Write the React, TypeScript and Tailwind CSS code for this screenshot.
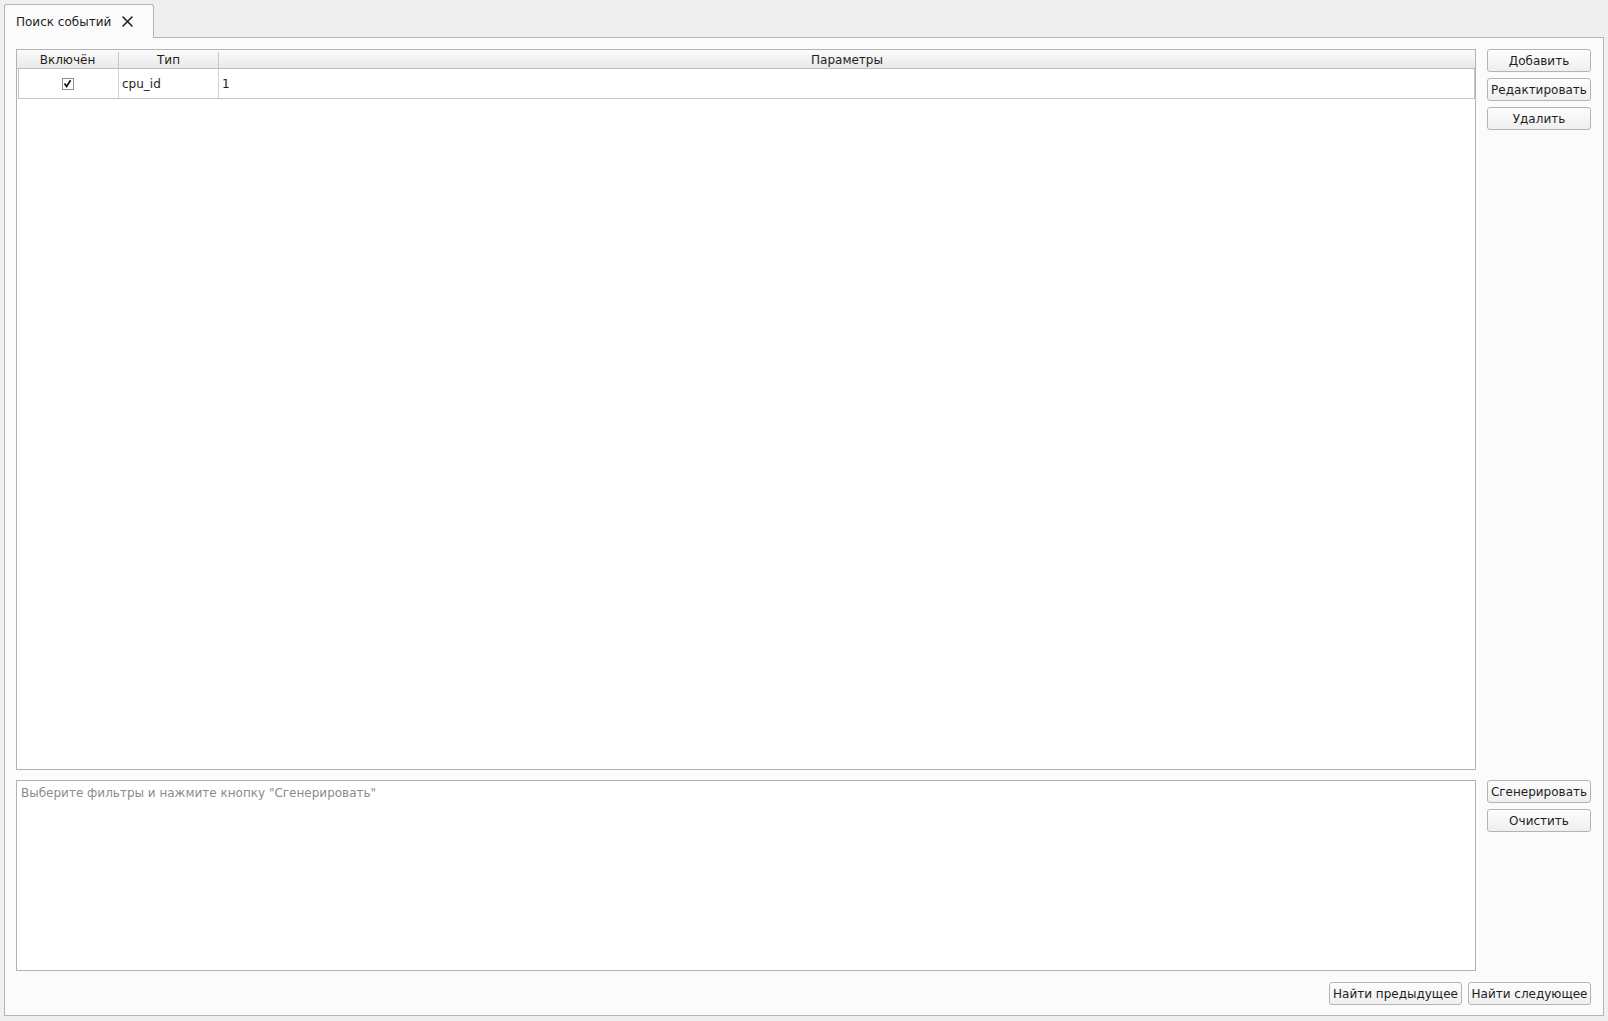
import React from "react";

const font = { fontFamily: '"DejaVu Sans", "Liberation Sans", sans-serif' };

function Button({ label, className = "" }: { label: string; className?: string }) {
  return (
    <button
      className={`h-[23px] flex items-center justify-center rounded-[3px] border border-[#b4b4b4] bg-gradient-to-b from-[#fdfdfd] to-[#efefef] text-[12px] text-[#1e1e1e] whitespace-nowrap ${className}`}
    >
      {label}
    </button>
  );
}

function CloseIcon() {
  return (
    <svg width="11" height="11" viewBox="0 0 11 11" className="block">
      <path d="M1 1 L10 10 M10 1 L1 10" stroke="#222" strokeWidth="1.6" strokeLinecap="round" />
    </svg>
  );
}

function EventTable() {
  return (
    <div className="flex-1 h-[721px] border border-[#b2b2b2] bg-white flex flex-col">
      <div className="flex h-[19px] pt-[2px] bg-gradient-to-b from-[#fbfbfb] to-[#e9e9e9] border-b border-[#bdbdbd] text-[12px] text-[#1e1e1e]">
        <div className="w-[102px] flex items-center justify-center border-r border-[#c8c8c8]">Включён</div>
        <div className="w-[100px] flex items-center justify-center border-r border-[#c8c8c8]">Тип</div>
        <div className="flex-1 flex items-center justify-center">Параметры</div>
      </div>
      <div className="flex h-[30px] ml-[1px] border border-t-0 border-[#c4c4c4] text-[12px] text-[#1e1e1e]">
        <div className="w-[100px] flex items-center justify-center border-r border-[#d2d2d2]">
          <div className="w-[12px] h-[12px] -ml-[2px] border border-[#8e8e8e] bg-white flex items-center justify-center">
            <svg width="9" height="9" viewBox="0 0 9 9">
              <path d="M1.5 4.5 L3.6 7.4 L7.6 1.2" fill="none" stroke="#111" strokeWidth="1.7" />
            </svg>
          </div>
        </div>
        <div className="w-[100px] flex items-center pl-[3px] border-r border-[#d2d2d2]">cpu_id</div>
        <div className="flex-1 flex items-center pl-[3px]">1</div>
      </div>
    </div>
  );
}

export default function App() {
  return (
    <div style={font} className="w-[1608px] h-[1021px] bg-[#efefef] flex flex-col overflow-hidden">
      <div className="flex pl-[4px] pt-[4px]">
        <div className="relative z-10 -mb-px w-[150px] h-[34px] bg-[#fbfbfb] border border-b-0 border-[#b4b4b4] rounded-t-[3px] flex items-center pl-[11px] text-[12px] text-[#1e1e1e]">
          <span>Поиск событий</span>
          <span className="ml-[11px]">
            <CloseIcon />
          </span>
        </div>
      </div>
      <div className="mx-[4px] h-[979px] border border-[#b4b4b4] bg-[#fbfbfb] pl-[11px] pr-[12px] pt-[11px] pb-[10px] flex flex-col">
        <div className="flex gap-[11px]">
          <EventTable />
          <div className="w-[104px] flex flex-col gap-[6px]">
            <Button label="Добавить" />
            <Button label="Редактировать" />
            <Button label="Удалить" />
          </div>
        </div>
        <div className="flex gap-[11px] mt-[10px]">
          <div className="flex-1 h-[191px] border border-[#b2b2b2] bg-white px-[4px] pt-[3px] text-[12px] text-[#8c8c8c]">
            Выберите фильтры и нажмите кнопку "Сгенерировать"
          </div>
          <div className="w-[104px] flex flex-col gap-[6px]">
            <Button label="Сгенерировать" />
            <Button label="Очистить" />
          </div>
        </div>
        <div className="flex justify-end gap-[6px] mt-[11px]">
          <Button label="Найти предыдущее" className="w-[133px]" />
          <Button label="Найти следующее" className="w-[123px]" />
        </div>
      </div>
    </div>
  );
}
